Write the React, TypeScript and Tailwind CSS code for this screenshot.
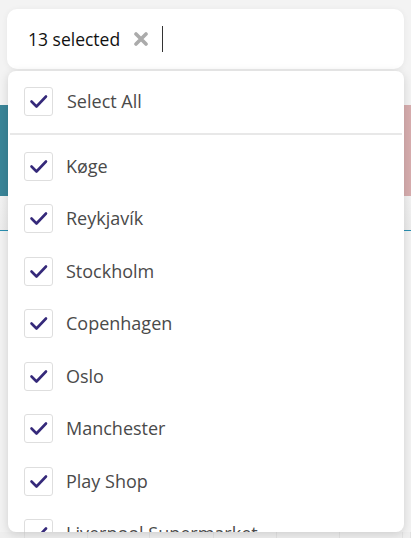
import { useState } from 'react';

const cities = [
  'Køge',
  'Reykjavík',
  'Stockholm',
  'Copenhagen',
  'Oslo',
  'Manchester',
  'Play Shop',
  'Liverpool Supermarket',
];

function CheckBox({ checked }: { checked: boolean }) {
  return (
    <span className="flex h-[29px] w-[29px] shrink-0 items-center justify-center rounded-[3px] border border-[#dedede] bg-white">
      {checked && (
        <svg width="19" height="19" viewBox="0 0 19 19" fill="none">
          <path d="M2.5 9.5 L7.5 14.5 L17 4.5" stroke="#35297a" strokeWidth="2.6" strokeLinecap="round" strokeLinejoin="round" />
        </svg>
      )}
    </span>
  );
}

export default function App() {
  const [selected] = useState(cities.map(() => true));

  return (
    <div className="relative h-[538px] w-[411px] overflow-hidden bg-[#f3f3f3]" style={{ fontFamily: '"Open Sans", "Noto Sans", sans-serif' }}>
      {/* search / input */}
      <div className="mx-[7px] mt-[9px] flex h-[60px] items-center rounded-[10px] bg-white pl-[21px] shadow-[0_1px_6px_rgba(0,0,0,0.06)]">
        <span className="text-[17.5px] text-[#111]">13 selected</span>
        <svg className="ml-[14px]" width="14" height="14" viewBox="0 0 14 14">
          <path d="M2 2 L12 12 M12 2 L2 12" stroke="#ababab" strokeWidth="3.6" strokeLinecap="round" />
        </svg>
        <span className="ml-[14px] h-[26px] w-px bg-[#333]" />
      </div>

      {/* page content behind */}
      <div className="mt-[36px] flex h-[91px]">
        <div className="flex-1 bg-[#3a8598]" />
        <div className="flex-1 bg-[#d7adae]" />
      </div>
      <div className="h-[34px] bg-gradient-to-b from-[#f2f2f2] to-[#ececec]" />
      <div className="h-px bg-[#2a8fb0]" />
      <div className="h-[301px] bg-[#f2f2f2]" />
      <div className="grid h-[20px] grid-cols-[25px_63px_62px_64px_63px_63px_63px_8px] bg-[#eeeeee]">
        {Array.from({ length: 8 }).map((_, i) => (
          <div key={i} className="border-r border-[#e2e2e2]" />
        ))}
      </div>

      {/* dropdown */}
      <div className="absolute left-[8px] top-[71px] h-[461px] w-[396px] overflow-hidden rounded-[8px] bg-white pt-[4px] shadow-[0_2px_10px_rgba(0,0,0,0.14)]">
        <div className="flex h-[53px] items-center pl-[16px]">
          <CheckBox checked />
          <span className="ml-[14px] text-[18px] text-[#4a4a4a]">Select All</span>
        </div>
        <div className="mx-[2px] mt-[5px] h-[2px] bg-[#e8e8e8]" />
        <div className="pt-[5px]">
          {cities.map((c, i) => (
            <div key={c} className="flex h-[52.5px] items-center pl-[16px]">
              <CheckBox checked={selected[i]} />
              <span className="ml-[13px] text-[18px] text-[#4a4a4a]">{c}</span>
            </div>
          ))}
        </div>
      </div>
    </div>
  );
}
